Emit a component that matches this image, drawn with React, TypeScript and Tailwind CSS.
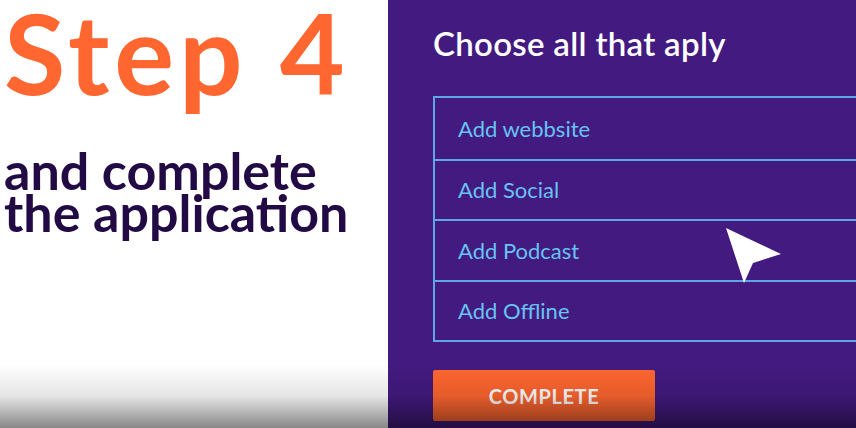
const rows = ['Add webbsite', 'Add Social', 'Add Podcast', 'Add Offline'];

export default function App() {
  return (
    <div className="relative flex h-[428px] w-[856px] overflow-hidden bg-white font-['Lato',sans-serif]">
      <div className="w-[388px] shrink-0 pl-[4px]">
        <h1 className="text-[112px] font-bold leading-[104px] tracking-[5px] text-[#ff6630]">Step 4</h1>
        <p className="mt-[45px] text-[52px] font-bold leading-[42px] text-[#220a45]">
          and complete
          <br />
          the application
        </p>
      </div>

      <div className="flex-1 bg-[#431a80] pl-[45px] pt-[23px]">
        <h2 className="text-[33px] font-semibold leading-[40px] tracking-[0.3px] text-white">Choose all that aply</h2>
        <ul className="mt-[33px] border-y-2 border-l-2 border-[#5ea6e6]">
          {rows.map((r, i) => (
            <li
              key={r}
              className={`flex h-[60.5px] items-center pl-[23px] text-[22px] text-[#66c4f2] ${
                i > 0 ? 'border-t-2 border-[#5ea6e6]' : ''
              }`}
            >
              {r}
            </li>
          ))}
        </ul>
        <button className="mt-[28px] flex h-[51px] w-[222px] items-center justify-center rounded-[2px] bg-[#ff6630] text-[20px] font-bold tracking-[0.6px] text-white">
          COMPLETE
        </button>
      </div>

      <svg className="pointer-events-none absolute left-0 top-0" width="856" height="428">
        <polygon points="726,228 781,254 753,263 744,283" fill="white" />
      </svg>
      <div className="pointer-events-none absolute bottom-0 left-0 h-[64px] w-full bg-[linear-gradient(to_bottom,transparent,rgba(0,0,0,0.1)_50%,rgba(0,0,0,0.47))]" />
    </div>
  );
}
